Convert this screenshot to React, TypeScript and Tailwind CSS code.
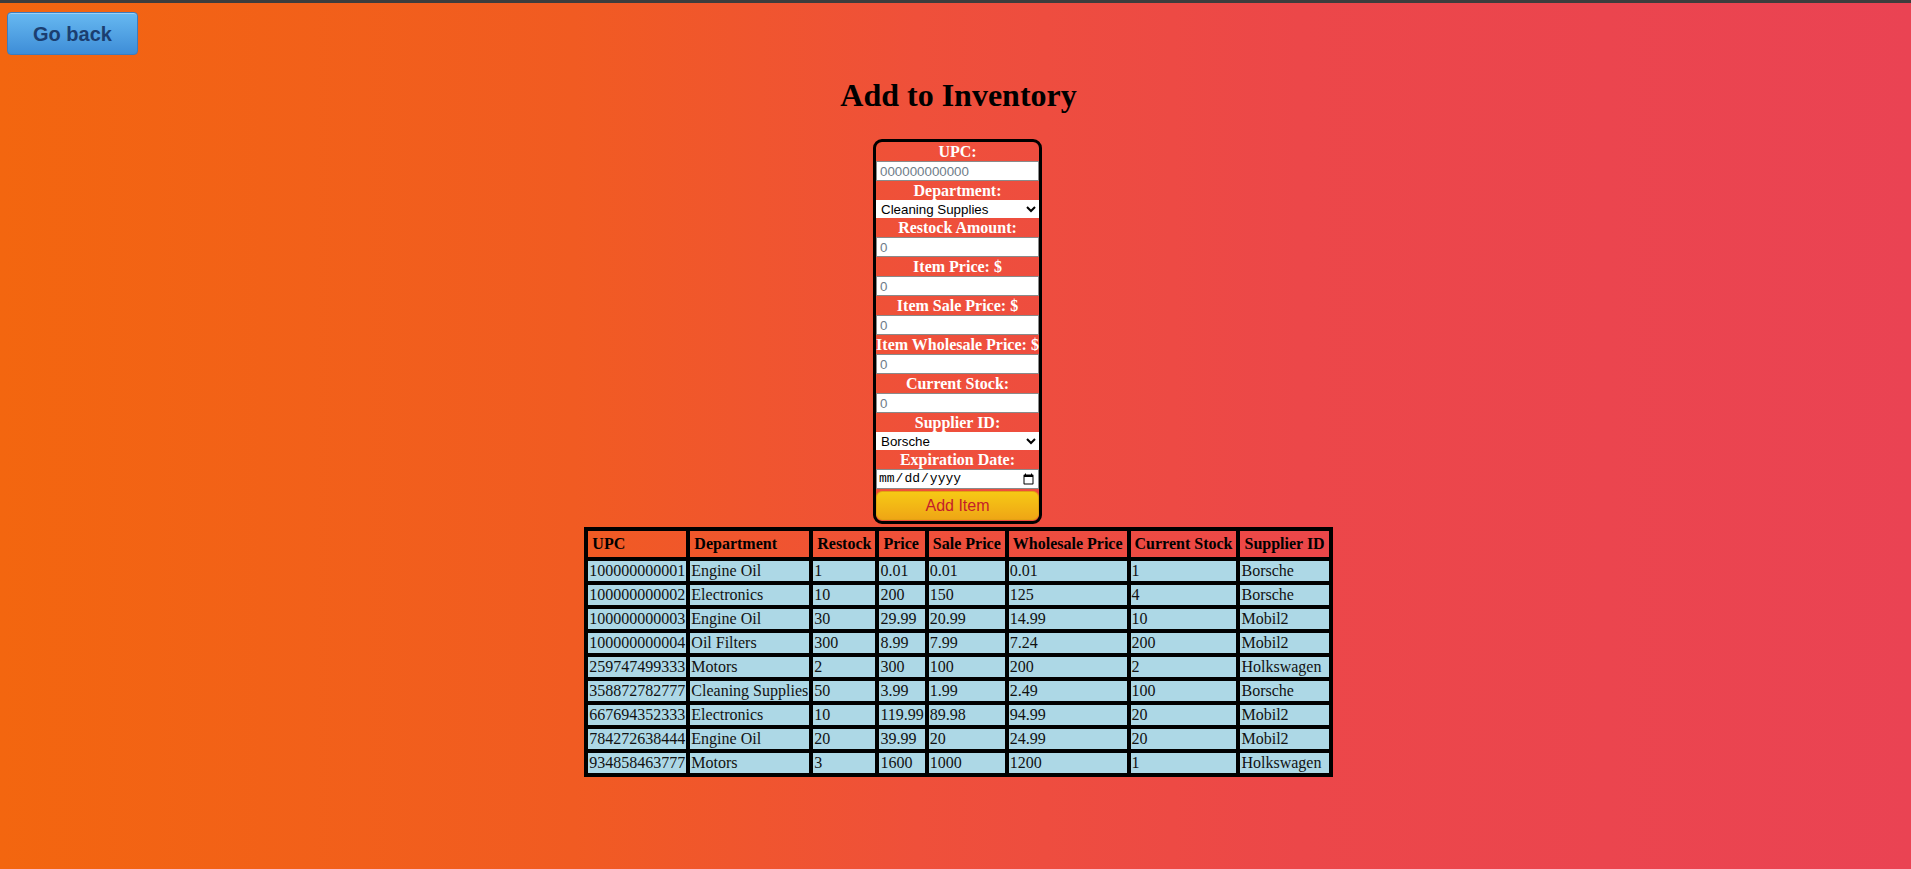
const rows = [
  ["100000000001", "Engine Oil", "1", "0.01", "0.01", "0.01", "1", "Borsche"],
  ["100000000002", "Electronics", "10", "200", "150", "125", "4", "Borsche"],
  ["100000000003", "Engine Oil", "30", "29.99", "20.99", "14.99", "10", "Mobil2"],
  ["100000000004", "Oil Filters", "300", "8.99", "7.99", "7.24", "200", "Mobil2"],
  ["259747499333", "Motors", "2", "300", "100", "200", "2", "Holkswagen"],
  ["358872782777", "Cleaning Supplies", "50", "3.99", "1.99", "2.49", "100", "Borsche"],
  ["667694352333", "Electronics", "10", "119.99", "89.98", "94.99", "20", "Mobil2"],
  ["784272638444", "Engine Oil", "20", "39.99", "20", "24.99", "20", "Mobil2"],
  ["934858463777", "Motors", "3", "1600", "1000", "1200", "1", "Holkswagen"],
];

const headers = ["UPC", "Department", "Restock", "Price", "Sale Price", "Wholesale Price", "Current Stock", "Supplier ID"];

function Label({ children }: { children: React.ReactNode }) {
  return (
    <div className="h-[19px] leading-[19px] text-center font-bold text-[16px] text-white whitespace-nowrap">
      {children}
    </div>
  );
}

function NumInput({ placeholder }: { placeholder: string }) {
  return (
    <input
      type="text"
      placeholder={placeholder}
      className="block w-full h-[20px] bg-white border border-[#8a8a8a] px-[3px] text-[13.33px] font-['Liberation_Sans',Arial,sans-serif] text-black placeholder:text-[#6f7c88] outline-none"
    />
  );
}

function Select({ value, options }: { value: string; options: string[] }) {
  return (
    <select
      defaultValue={value}
      className="block w-full h-[18px] bg-white text-black text-[13.33px] font-['Liberation_Sans',Arial,sans-serif] pl-[1px] outline-none"
    >
      {options.map((o) => (
        <option key={o}>{o}</option>
      ))}
    </select>
  );
}

export default function App() {
  return (
    <div className="min-h-screen bg-[linear-gradient(to_right,#f3660f_0%,#f15b22_30%,#ef503a_48%,#ec4749_68%,#ea4353_100%)] font-['Liberation_Serif','Times_New_Roman',serif] text-black">
      {/* top strip */}
      <div className="h-[3px] bg-[#3d3d3d]" />

      <div className="pl-[7px] pt-[9px]">
        <button className="w-[131px] h-[43px] rounded-[4px] border border-[#3b7cc0] bg-[linear-gradient(to_bottom,#67b9f1,#3e8dd7)] text-[20px] font-bold text-[#1b3e70] font-['Liberation_Sans',Arial,sans-serif] shadow-[inset_0_1px_0_rgba(255,255,255,0.35)]">
          Go back
        </button>
      </div>

      <div className="pl-[6px]">
        <h1 className="mt-[22px] h-[37px] leading-[37px] text-center text-[32px] font-bold">Add to Inventory</h1>

        <div className="mt-[25px] flex justify-center">
          <form className="w-[169px] -ml-[2px] border-[3px] border-black rounded-[9px] overflow-hidden" onSubmit={(e) => e.preventDefault()}>
            <Label>UPC:</Label>
            <NumInput placeholder="000000000000" />
            <Label>Department:</Label>
            <Select value="Cleaning Supplies" options={["Cleaning Supplies", "Electronics", "Engine Oil", "Motors", "Oil Filters"]} />
            <Label>Restock Amount:</Label>
            <NumInput placeholder="0" />
            <Label>Item Price: $</Label>
            <NumInput placeholder="0" />
            <Label>Item Sale Price: $</Label>
            <NumInput placeholder="0" />
            <div className="-mx-[2px]">
              <Label>Item Wholesale Price: $</Label>
            </div>
            <NumInput placeholder="0" />
            <Label>Current Stock:</Label>
            <NumInput placeholder="0" />
            <Label>Supplier ID:</Label>
            <Select value="Borsche" options={["Borsche", "Mobil2", "Holkswagen"]} />
            <Label>Expiration Date:</Label>
            <input
              type="date"
              className="block w-full h-[20px] bg-white border border-[#8a8a8a] px-[1px] text-[13px] text-black font-['Liberation_Mono',monospace] outline-none"
            />
            <button
              type="submit"
              className="mt-[2px] mb-[1px] block w-full h-[29px] rounded-[6px] border border-[#e3a312] bg-[linear-gradient(to_bottom,#f6c915,#efa615)] text-[16px] text-[#c41e2a] font-['Liberation_Sans',Arial,sans-serif]"
            >
              Add Item
            </button>
          </form>
        </div>

        <div className="mt-[3px] flex justify-center pb-10">
          <table className="border-separate border-spacing-0 border-2 border-black text-[16px]">
            <thead>
              <tr>
                {headers.map((h) => (
                  <th key={h} className="border-2 border-black px-[4px] py-[4px] text-left font-bold whitespace-nowrap leading-[18px]">
                    {h}
                  </th>
                ))}
              </tr>
            </thead>
            <tbody>
              {rows.map((r) => (
                <tr key={r[0]}>
                  {r.map((c, i) => (
                    <td key={i} className="border-2 border-black bg-[#add8e6] p-[1px] text-[#111] whitespace-nowrap leading-[18px]">
                      {c}
                    </td>
                  ))}
                </tr>
              ))}
            </tbody>
          </table>
        </div>
      </div>
    </div>
  );
}
